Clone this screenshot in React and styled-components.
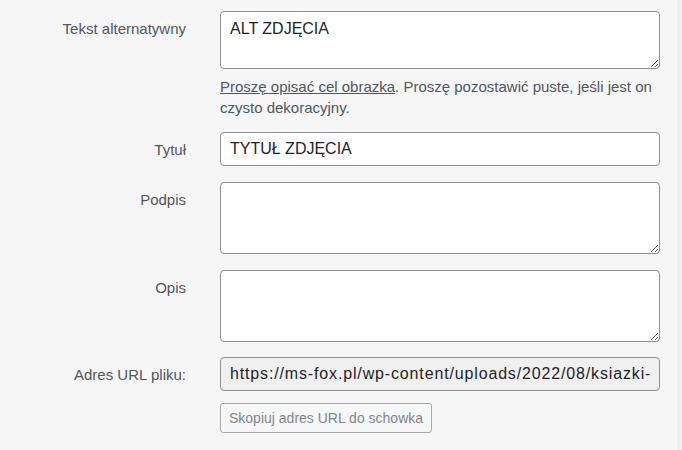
import React from 'react';
import styled, { createGlobalStyle } from 'styled-components';

const GlobalStyle = createGlobalStyle`
  html, body {
    margin: 0;
    padding: 0;
    background: #f6f6f6;
  }
  body {
    font-family: "Liberation Sans", Arial, sans-serif;
  }
`;

const Page = styled.div`
  width: 682px;
  height: 450px;
  box-sizing: border-box;
  padding-top: 11px;
  background: #f6f6f6;
  border-right: 5px solid #f0f0f0;
  overflow: hidden;
`;

const Form = styled.div`
  display: grid;
  grid-template-columns: 186px 440px;
  column-gap: 34px;
`;

const Label = styled.label`
  text-align: right;
  font-size: 15px;
  line-height: 20px;
  color: #50575e;
  padding-top: ${(p) => (p.$single ? '8px' : '8px')};
`;

const Field = styled.div`
  display: flex;
  flex-direction: column;
  margin-bottom: ${(p) => p.$gap || 16}px;
`;

const baseBox = `
  box-sizing: border-box;
  width: 440px;
  border: 1px solid #8c8f94;
  border-radius: 4px;
  font-family: "Liberation Sans", Arial, sans-serif;
  font-size: 16px;
  color: #1d2327;
  margin: 0;
  outline: none;
`;

const Area = styled.textarea`
  ${baseBox}
  height: ${(p) => p.$h || 72}px;
  padding: 7px 9px;
  line-height: 20px;
  background: #fff;
  resize: vertical;
  display: block;
`;

const Input = styled.input`
  ${baseBox}
  height: 34px;
  padding: 0 9px;
  background: ${(p) => (p.$readonly ? '#f0f0f1' : '#fff')};
  letter-spacing: ${(p) => (p.$readonly ? '0.85px' : 'normal')};
  display: block;
`;

const Help = styled.p`
  margin: 7px 0 0;
  font-size: 15px;
  line-height: 21px;
  color: #50575e;
`;

const HelpLink = styled.a`
  color: #50575e;
  text-decoration: underline;
`;

const CopyButton = styled.button`
  align-self: flex-start;
  margin-top: 12px;
  box-sizing: border-box;
  height: 30px;
  padding: 0 8px;
  white-space: nowrap;
  border: 1px solid #a7aaad;
  border-radius: 3px;
  background: #f6f7f7;
  color: #82868b;
  font-family: "Liberation Sans", Arial, sans-serif;
  font-size: 14px;
  cursor: pointer;
`;

const App = () => {
  return (
    <>
      <GlobalStyle />
      <Page>
        <Form>
          <Label>Tekst alternatywny</Label>
          <Field $gap={14}>
            <Area $h={58} defaultValue="ALT ZDJĘCIA" />
            <Help>
              <HelpLink href="#">Proszę opisać cel obrazka</HelpLink>. Proszę pozostawić puste,
              jeśli jest on czysto dekoracyjny.
            </Help>
          </Field>

          <Label $single>Tytuł</Label>
          <Field>
            <Input defaultValue="TYTUŁ ZDJĘCIA" />
          </Field>

          <Label>Podpis</Label>
          <Field>
            <Area />
          </Field>

          <Label>Opis</Label>
          <Field $gap={15}>
            <Area />
          </Field>

          <Label $single>Adres URL pliku:</Label>
          <Field>
            <Input
              $readonly
              readOnly
              defaultValue="https://ms-fox.pl/wp-content/uploads/2022/08/ksiazki-do-czytania.jpg"
            />
            <CopyButton type="button">Skopiuj adres URL do schowka</CopyButton>
          </Field>
        </Form>
      </Page>
    </>
  );
};

export default App;
